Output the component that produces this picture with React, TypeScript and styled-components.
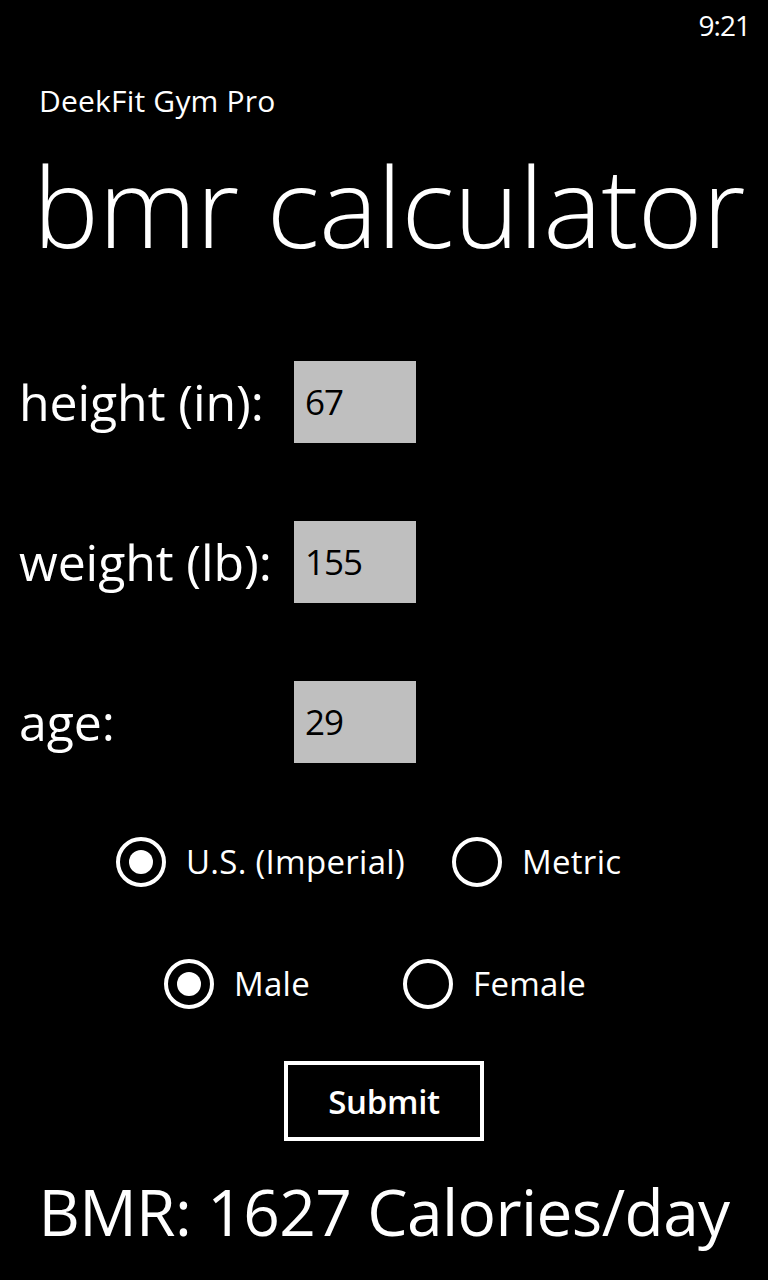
import React from "react";
import styled, { createGlobalStyle } from "styled-components";

const Global = createGlobalStyle`
  html, body { margin: 0; padding: 0; background: #000; }
  body { font-family: "Open Sans", "Noto Sans", sans-serif; color: #fff; }
  * { box-sizing: border-box; }
`;

const Page = styled.div`
  width: 768px;
  height: 1280px;
  background: #000;
  display: flex;
  flex-direction: column;
  overflow: hidden;
`;

const StatusBar = styled.div`
  display: flex;
  justify-content: flex-end;
  padding: 5px 18px 0 0;
  font-size: 28px;
  line-height: 40px;
  letter-spacing: -1px;
`;

const AppName = styled.div`
  margin: 36px 0 0 39px;
  font-size: 30px;
  line-height: 40px;
  letter-spacing: 0.2px;
`;

const Title = styled.h1`
  margin: 24px 0 0 33px;
  font-size: 111px;
  line-height: 120px;
  font-weight: 300;
  letter-spacing: -0.6px;
  white-space: nowrap;
`;

const Form = styled.div`
  margin-top: 96px;
  padding-left: 19px;
  display: flex;
  flex-direction: column;
  gap: 78px;
`;

const FieldRow = styled.div`
  display: grid;
  grid-template-columns: 275px 122px;
  align-items: center;
  height: 82px;
`;

const Label = styled.label`
  font-size: 50px;
  line-height: 82px;
  letter-spacing: -0.1px;
  white-space: nowrap;
`;

const Box = styled.div`
  width: 122px;
  height: 82px;
  background: #bfbfbf;
  color: #000;
  font-size: 35px;
  line-height: 82px;
  letter-spacing: -1px;
  padding-left: 11px;
`;

const RadioGroup = styled.div`
  margin-top: 74px;
  display: flex;
  flex-direction: column;
  gap: 72px;
`;

const RadioRow = styled.div<{ $left: number; $gap: number }>`
  display: flex;
  align-items: center;
  height: 50px;
  padding-left: ${(p) => p.$left}px;
  gap: ${(p) => p.$gap}px;
`;

const RadioItem = styled.div`
  display: flex;
  align-items: center;
  gap: 20px;
`;

const Circle = styled.span<{ $checked?: boolean }>`
  width: 50px;
  height: 50px;
  border-radius: 50%;
  border: 4px solid #fff;
  display: flex;
  align-items: center;
  justify-content: center;
  &::after {
    content: "";
    width: 24px;
    height: 24px;
    border-radius: 50%;
    background: #fff;
    display: ${(p) => (p.$checked ? "block" : "none")};
  }
`;

const RadioText = styled.span`
  font-size: 33px;
  line-height: 50px;
  letter-spacing: 0.3px;
  white-space: nowrap;
`;

const SubmitButton = styled.button`
  align-self: center;
  margin-top: 52px;
  width: 200px;
  height: 80px;
  background: #000;
  color: #fff;
  border: 4px solid #fff;
  font-family: "Open Sans", "Noto Sans", sans-serif;
  font-size: 33px;
  font-weight: 600;
  letter-spacing: -0.3px;
  padding: 0;
`;

const Result = styled.div`
  margin-top: 31px;
  text-align: center;
  font-size: 64px;
  line-height: 80px;
  letter-spacing: -0.6px;
  white-space: nowrap;
`;

const fields = [
  { label: "height (in):", value: "67" },
  { label: "weight (lb):", value: "155" },
  { label: "age:", value: "29" },
];

export default function App() {
  return (
    <Page>
      <Global />
      <StatusBar>9:21</StatusBar>
      <AppName>DeekFit Gym Pro</AppName>
      <Title>bmr calculator</Title>
      <Form>
        {fields.map((f) => (
          <FieldRow key={f.label}>
            <Label>{f.label}</Label>
            <Box>{f.value}</Box>
          </FieldRow>
        ))}
      </Form>
      <RadioGroup>
        <RadioRow $left={116} $gap={47}>
          <RadioItem>
            <Circle $checked />
            <RadioText>U.S. (Imperial)</RadioText>
          </RadioItem>
          <RadioItem>
            <Circle />
            <RadioText>Metric</RadioText>
          </RadioItem>
        </RadioRow>
        <RadioRow $left={164} $gap={93}>
          <RadioItem>
            <Circle $checked />
            <RadioText>Male</RadioText>
          </RadioItem>
          <RadioItem>
            <Circle />
            <RadioText>Female</RadioText>
          </RadioItem>
        </RadioRow>
      </RadioGroup>
      <SubmitButton>Submit</SubmitButton>
      <Result>BMR: 1627 Calories/day</Result>
    </Page>
  );
}
